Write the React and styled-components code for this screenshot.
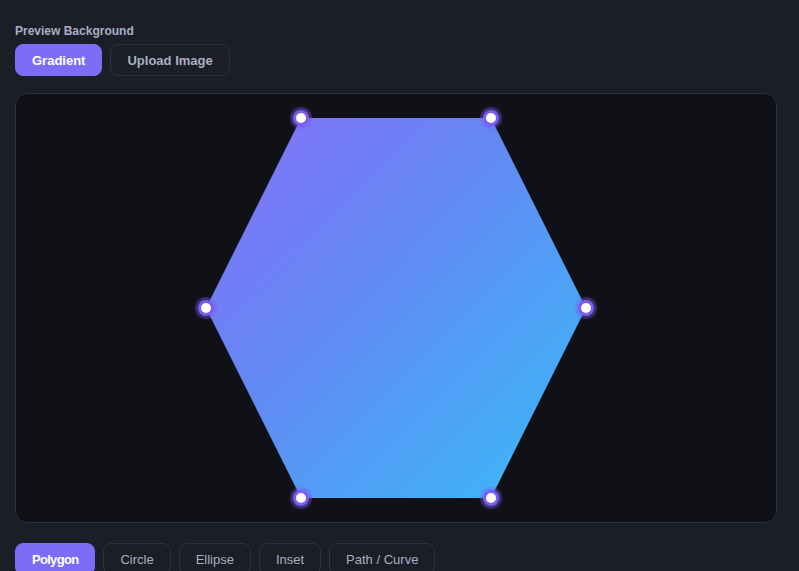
import React from "react";
import styled, { createGlobalStyle } from "styled-components";

const Global = createGlobalStyle`
  html, body { margin: 0; padding: 0; background: #1b1d27; }
  body { font-family: "Liberation Sans", Arial, sans-serif; color: #a9b0c3; }
  * { box-sizing: border-box; }
`;

const Page = styled.div`
  padding: 22px 22px 20px 15px;
  display: flex;
  flex-direction: column;
  min-height: 571px;
`;

const Label = styled.div`
  font-size: 12px;
  font-weight: 700;
  color: #a9b0c3;
  line-height: 18px;
  margin-bottom: 4px;
`;

const ButtonRow = styled.div`
  display: flex;
  gap: 8px;
`;

const Toggle = styled.button`
  height: 32px;
  padding: 0 16px;
  border-radius: 8px;
  font-family: inherit;
  font-size: 13px;
  font-weight: ${(p) => (p.$active || p.$bold ? 700 : 400)};
  border: 1px solid ${(p) => (p.$active ? "#7c6cf6" : "#2d303d")};
  background: ${(p) => (p.$active ? "#7c6cf6" : "#1b1d27")};
  color: ${(p) => (p.$active ? "#ffffff" : "#a9b0c3")};
  cursor: pointer;
`;

const ShapeTab = styled(Toggle)`
  letter-spacing: ${(p) => (p.$active ? "-0.7px" : "0")};
`;

const Canvas = styled.div`
  margin-top: 17px;
  margin-bottom: 20px;
  background: #101117;
  border: 1px solid #2b2e3b;
  border-radius: 12px;
  padding: 24px;
  display: flex;
  justify-content: center;
  align-items: center;
`;

const ShapeBox = styled.div`
  position: relative;
  width: 380px;
  height: 380px;
`;

const Shape = styled.div`
  width: 100%;
  height: 100%;
  background: linear-gradient(135deg, #8670f7 0%, #6487f5 40%, #38bdf8 100%);
  clip-path: polygon(25% 0%, 75% 0%, 100% 50%, 75% 100%, 25% 100%, 0% 50%);
`;

const Handle = styled.span`
  position: absolute;
  width: 16px;
  height: 16px;
  margin: -8px 0 0 -8px;
  border-radius: 50%;
  background: #ffffff;
  border: 3px solid #7c5cf2;
  box-shadow: 0 0 0 3px rgba(124, 92, 242, 0.3), 0 0 6px rgba(124, 92, 242, 0.4);
`;

const points = [
  [25, 0],
  [75, 0],
  [100, 50],
  [75, 100],
  [25, 100],
  [0, 50],
];

export default function App() {
  const [bg, setBg] = React.useState("gradient");
  const [shape, setShape] = React.useState("Polygon");
  return (
    <>
      <Global />
      <Page>
        <Label>Preview Background</Label>
        <ButtonRow>
          <Toggle $bold $active={bg === "gradient"} onClick={() => setBg("gradient")}>
            Gradient
          </Toggle>
          <Toggle $bold $active={bg === "upload"} onClick={() => setBg("upload")}>
            Upload Image
          </Toggle>
        </ButtonRow>
        <Canvas>
          <ShapeBox>
            <Shape />
            {points.map(([x, y], i) => (
              <Handle key={i} style={{ left: `${x}%`, top: `${y}%` }} />
            ))}
          </ShapeBox>
        </Canvas>
        <ButtonRow>
          {["Polygon", "Circle", "Ellipse", "Inset", "Path / Curve"].map((s) => (
            <ShapeTab key={s} $active={shape === s} onClick={() => setShape(s)}>
              {s}
            </ShapeTab>
          ))}
        </ButtonRow>
      </Page>
    </>
  );
}
